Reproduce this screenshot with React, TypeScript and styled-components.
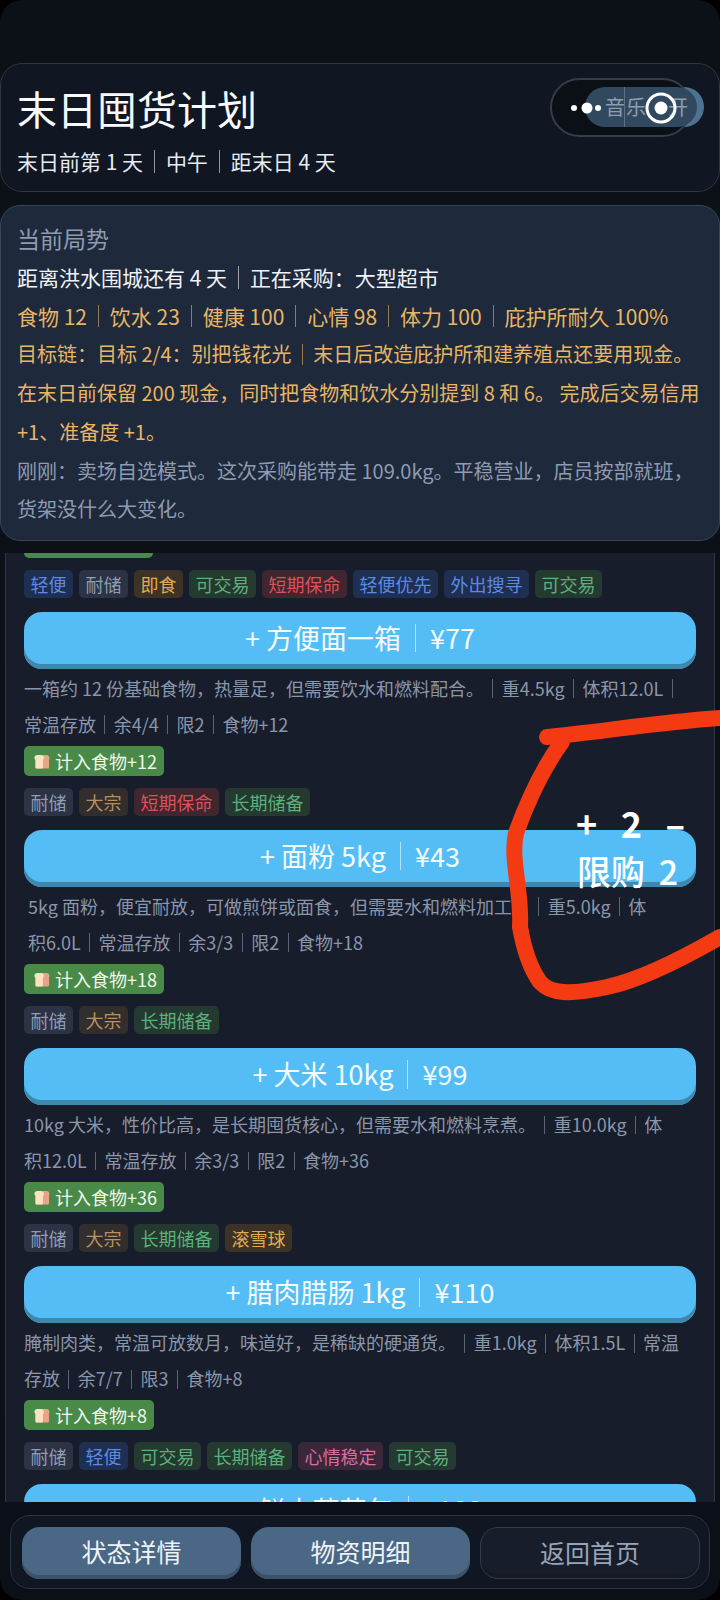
import React from 'react';
import styled, { createGlobalStyle } from 'styled-components';

type Tone = 'blue' | 'gray' | 'amber' | 'green' | 'red' | 'brown' | 'pink';

type Item = {
    name: string;
    price: string;
    lines: string[][];
    gain: string;
    tags: [string, Tone][];
    indent?: number;
};

const toneColors: Record<Tone, { bg: string; fg: string }> = {
    blue: { bg: '#1f2f52', fg: '#5a8ae6' },
    gray: { bg: '#2b3344', fg: '#8f9db2' },
    amber: { bg: '#3c3226', fg: '#e0ab52' },
    green: { bg: '#24392f', fg: '#5cb07c' },
    red: { bg: '#40262e', fg: '#d9535a' },
    brown: { bg: '#322e2e', fg: '#b8925c' },
    pink: { bg: '#3a2739', fg: '#d96ea0' },
};

const GlobalStyle = createGlobalStyle`
    html, body {
        margin: 0;
        padding: 0;
        background: #000;
    }
    * {
        box-sizing: border-box;
    }
`;

const Page = styled.div`
    position: relative;
    width: 720px;
    height: 1600px;
    overflow: hidden;
    border-radius: 22px;
    display: flex;
    flex-direction: column;
    padding-top: 63px;
    background: linear-gradient(180deg, #0c1017 0%, #0b1018 100%);
    color: #f1f5f9;
    font-family: 'Noto Sans CJK SC', 'Noto Sans', sans-serif;
`;

const HeaderCard = styled.header`
    height: 129px;
    padding: 16px 16px 0;
    border: 1px solid #2f3644;
    border-radius: 22px;
    background: #101622;
    flex-shrink: 0;
`;

const Title = styled.h1`
    margin: 0;
    font-size: 40px;
    line-height: 56px;
    font-weight: 400;
    color: #f8fafc;
`;

const SubTitle = styled.div`
    margin-top: 9px;
    font-size: 21px;
    line-height: 32px;
    color: #e6ebf2;
`;

const Sep = styled.span`
    display: inline-block;
    width: 1px;
    height: 1.05em;
    margin: 0 0.52em;
    vertical-align: -0.12em;
    background: currentColor;
    opacity: 0.6;
`;

const StatusCard = styled.section`
    margin-top: 13px;
    height: 336px;
    padding: 12px 16px 0;
    border: 1px solid #38445a;
    border-radius: 20px;
    background: #1e293b;
    flex-shrink: 0;
`;

const StatusHeading = styled.div`
    font-size: 23px;
    line-height: 40px;
    color: #8e9bb0;
`;

const StatusLine = styled.div<{ $tone: 'white' | 'gold' | 'gray'; $small?: boolean }>`
    font-size: ${(props) => (props.$small ? 20 : 21)}px;
    line-height: 38.7px;
    white-space: nowrap;
    color: ${(props) =>
        props.$tone === 'gold' ? '#e8b565' : props.$tone === 'gray' ? '#8e9bb0' : '#eef2f7'};
`;

const ListPanel = styled.main`
    margin: 12px 5px 0;
    height: 949px;
    padding: 0 18px;
    border-left: 1px solid #2f3644;
    border-right: 1px solid #2f3644;
    background: #181d2b;
    overflow: hidden;
    flex-shrink: 0;
`;

const ClippedBadge = styled.div`
    width: 129px;
    height: 5px;
    border-radius: 0 0 5px 5px;
    background: #4a8a49;
`;

const TagRow = styled.div`
    display: flex;
    gap: 6px;
    height: 28px;
    margin-top: 12px;
`;

const Tag = styled.span<{ $tone: Tone }>`
    display: block;
    padding: 0 6.5px;
    border-radius: 5px;
    font-size: 18px;
    line-height: 28px;
    background: ${(props) => toneColors[props.$tone].bg};
    color: ${(props) => toneColors[props.$tone].fg};
`;

const BuyButton = styled.button`
    display: block;
    width: 100%;
    height: 57px;
    margin-top: 14.1px;
    padding: 0 0 5px;
    border: 0;
    border-radius: 18px;
    background: #54bdf5;
    box-shadow: inset 0 -5px 0 #3f87ad;
    color: #f4fbff;
    font-family: inherit;
    font-size: 27px;
    line-height: 52px;
    text-align: center;
    flex-shrink: 0;
`;

const Desc = styled.div<{ $indent?: number }>`
    margin-top: 1px;
    padding-left: ${(props) => props.$indent || 0}px;
    font-size: 18px;
    line-height: 36px;
    color: #8a96aa;

    ${Sep} {
        margin: 0 8.4px;
    }
`;

const DescLine = styled.div`
    white-space: nowrap;
`;

const GainBadge = styled.div`
    display: inline-flex;
    align-items: center;
    gap: 5px;
    height: 30px;
    margin-top: 4px;
    padding: 0 7px 0 9px;
    border-radius: 5px;
    background: #4a8a49;
    color: #eef7ec;
    font-size: 18px;
    vertical-align: top;
`;

const BottomBar = styled.nav`
    margin-top: 13px;
    margin-left: 10px;
    width: 700px;
    height: 74px;
    padding: 11px 10px 0 11px;
    display: grid;
    grid-template-columns: 219px 219px 220px;
    column-gap: 10px;
    border: 1px solid #2c3341;
    border-radius: 20px;
    background: #111722;
    flex-shrink: 0;
`;

const NavButton = styled.button<{ $ghost?: boolean }>`
    height: 52px;
    padding: 0 0 4px;
    border: ${(props) => (props.$ghost ? '1px solid #343c4c' : '0')};
    border-radius: 18px;
    background: ${(props) => (props.$ghost ? '#171d2a' : '#4a6885')};
    box-shadow: inset 0 -4px 0 ${(props) => (props.$ghost ? '#151a26' : '#3d5268')};
    color: ${(props) => (props.$ghost ? '#98a4b7' : '#eef2f7')};
    font-family: inherit;
    font-size: 25px;
    line-height: 48px;
`;

const MusicPill = styled.div`
    position: absolute;
    top: 78px;
    left: 550px;
    width: 142px;
    height: 59px;
    border: 2px solid #363c49;
    border-radius: 30px;
    background: #0b0f16;
`;

const MusicTrack = styled.div`
    position: absolute;
    top: 87px;
    left: 585px;
    width: 119px;
    height: 40px;
    border-radius: 20px;
    background: #4e7391;
`;

const MusicInner = styled.div`
    position: absolute;
    top: 87px;
    left: 585px;
    width: 112px;
    height: 40px;
    border-radius: 20px;
    background: #31495f;
    color: #8f9db0;
    font-size: 20px;
    line-height: 40px;
    padding-left: 20px;
    white-space: nowrap;
`;

const MusicDivider = styled.span`
    display: inline-block;
    width: 1px;
    height: 40px;
    margin: 0 1px 0 -1px;
    vertical-align: top;
    background: #5d7487;
`;

const MusicOn = styled.span`
    margin-left: 22px;
`;

const CapsuleIcon = styled.svg`
    position: absolute;
    top: 90px;
    left: 565px;
`;

const Scribble = styled.svg`
    position: absolute;
    top: 0;
    left: 0;
    pointer-events: none;
`;

const Stepper = styled.div`
    position: absolute;
    top: 799px;
    left: 576px;
    width: 109px;
    display: flex;
    justify-content: space-between;
    color: #fff;
    font-size: 36px;
    line-height: 46px;
    font-weight: 700;
`;

const LimitText = styled.div`
    position: absolute;
    top: 847px;
    left: 577px;
    color: #fff;
    font-size: 34px;
    line-height: 48px;
    font-weight: 500;
    word-spacing: 6px;
    white-space: nowrap;
`;

const Bread = () => (
    <svg width="17" height="17" viewBox="0 0 18 18">
        <path d="M6 2h8c3 0 4 2.500 3 5v8c0 1-.6 1.500-1.500 1.500h-11C3.600 16.500 3 16 3 15V7C1 4 3 2 6 2z" fill="#e8a487" />
        <path d="M1.500 5C1.500 3 3 2 5 2h3c2 0 3.500 1 3.500 3 0 1-.5 1.700-1 2.200V15c0 1-.5 1.500-1.500 1.500H4c-1 0-1.500-.5-1.500-1.500V7.200C2 6.700 1.500 6 1.500 5z" fill="#fbe2c2" />
    </svg>
);

const items: Item[] = [
    {
        name: '方便面一箱',
        price: '¥77',
        lines: [
            ['一箱约 12 份基础食物，热量足，但需要饮水和燃料配合。', '重4.5kg', '体积12.0L', ''],
            ['常温存放', '余4/4', '限2', '食物+12'],
        ],
        gain: '计入食物+12',
        tags: [
            ['耐储', 'gray'],
            ['大宗', 'brown'],
            ['短期保命', 'red'],
            ['长期储备', 'green'],
        ],
    },
    {
        name: '面粉 5kg',
        price: '¥43',
        indent: 4,
        lines: [
            ['5kg 面粉，便宜耐放，可做煎饼或面食，但需要水和燃料加工。', '重5.0kg', '体'],
            ['积6.0L', '常温存放', '余3/3', '限2', '食物+18'],
        ],
        gain: '计入食物+18',
        tags: [
            ['耐储', 'gray'],
            ['大宗', 'brown'],
            ['长期储备', 'green'],
        ],
    },
    {
        name: '大米 10kg',
        price: '¥99',
        lines: [
            ['10kg 大米，性价比高，是长期囤货核心，但需要水和燃料烹煮。', '重10.0kg', '体'],
            ['积12.0L', '常温存放', '余3/3', '限2', '食物+36'],
        ],
        gain: '计入食物+36',
        tags: [
            ['耐储', 'gray'],
            ['大宗', 'brown'],
            ['长期储备', 'green'],
            ['滚雪球', 'amber'],
        ],
    },
    {
        name: '腊肉腊肠 1kg',
        price: '¥110',
        lines: [
            ['腌制肉类，常温可放数月，味道好，是稀缺的硬通货。', '重1.0kg', '体积1.5L', '常温'],
            ['存放', '余7/7', '限3', '食物+8'],
        ],
        gain: '计入食物+8',
        tags: [
            ['耐储', 'gray'],
            ['轻便', 'blue'],
            ['可交易', 'green'],
            ['长期储备', 'green'],
            ['心情稳定', 'pink'],
            ['可交易', 'green'],
        ],
    },
];

const firstTags: [string, Tone][] = [
    ['轻便', 'blue'],
    ['耐储', 'gray'],
    ['即食', 'amber'],
    ['可交易', 'green'],
    ['短期保命', 'red'],
    ['轻便优先', 'blue'],
    ['外出搜寻', 'blue'],
    ['可交易', 'green'],
];

const joinParts = (parts: string[]) =>
    parts.map((part, i) => (
        <React.Fragment key={i}>
            {i > 0 && <Sep />}
            {part}
        </React.Fragment>
    ));

const Tags = ({ tags }: { tags: [string, Tone][] }) => (
    <TagRow>
        {tags.map(([label, tone], i) => (
            <Tag key={i} $tone={tone}>
                {label}
            </Tag>
        ))}
    </TagRow>
);

export default function App() {
    return (
        <Page>
            <GlobalStyle />
            <HeaderCard>
                <Title>末日囤货计划</Title>
                <SubTitle>{joinParts(['末日前第 1 天', '中午', '距末日 4 天'])}</SubTitle>
            </HeaderCard>

            <StatusCard>
                <StatusHeading>当前局势</StatusHeading>
                <StatusLine $tone="white">{joinParts(['距离洪水围城还有 4 天', '正在采购：大型超市'])}</StatusLine>
                <StatusLine $tone="gold">
                    {joinParts(['食物 12', '饮水 23', '健康 100', '心情 98', '体力 100', '庇护所耐久 100%'])}
                </StatusLine>
                <StatusLine $tone="gold" $small>
                    {joinParts(['目标链：目标 2/4：别把钱花光', '末日后改造庇护所和建养殖点还要用现金。'])}
                </StatusLine>
                <StatusLine $tone="gold" $small>
                    在末日前保留 200 现金，同时把食物和饮水分别提到 8 和 6。 完成后交易信用
                </StatusLine>
                <StatusLine $tone="gold" $small>
                    +1、准备度 +1。
                </StatusLine>
                <StatusLine $tone="gray" $small>
                    刚刚：卖场自选模式。这次采购能带走 109.0kg。平稳营业，店员按部就班，
                </StatusLine>
                <StatusLine $tone="gray" $small>
                    货架没什么大变化。
                </StatusLine>
            </StatusCard>

            <ListPanel>
                <ClippedBadge />
                <Tags tags={firstTags} />
                {items.map((item) => (
                    <React.Fragment key={item.name}>
                        <BuyButton>
                            + {item.name}
                            <Sep />
                            {item.price}
                        </BuyButton>
                        <Desc $indent={item.indent}>
                            {item.lines.map((line, i) => (
                                <DescLine key={i}>{joinParts(line)}</DescLine>
                            ))}
                        </Desc>
                        <GainBadge>
                            <Bread />
                            {item.gain}
                        </GainBadge>
                        <Tags tags={item.tags} />
                    </React.Fragment>
                ))}
                <BuyButton>
                    + 鲜大蒜蒜包
                    <Sep />
                    ¥108
                </BuyButton>
            </ListPanel>

            <BottomBar>
                <NavButton>状态详情</NavButton>
                <NavButton>物资明细</NavButton>
                <NavButton $ghost>返回首页</NavButton>
            </BottomBar>

            <MusicTrack />
            <MusicPill />
            <MusicInner>
                音<MusicDivider />乐<MusicOn>开</MusicOn>
            </MusicInner>
            <CapsuleIcon width="120" height="36" viewBox="0 0 120 36">
                <circle cx="9" cy="18" r="3" fill="#fff" />
                <circle cx="22" cy="18" r="5.500" fill="#fff" />
                <circle cx="33" cy="18" r="3" fill="#fff" />
                <circle cx="96" cy="18" r="14" fill="none" stroke="#fff" strokeWidth="3" />
                <circle cx="96" cy="18" r="6.500" fill="#fff" />
            </CapsuleIcon>

            <Scribble width="720" height="1600" viewBox="0 0 720 1600">
                <path
                    d="M547 737 C 600 732, 660 722, 720 718 M562 742 C 545 765, 528 800, 516 833 C 510 860, 522 890, 520 927 C 524 950, 530 968, 540 982 C 550 994, 570 995, 607 987 C 640 980, 680 960, 720 937"
                    fill="none"
                    stroke="#f43a12"
                    strokeWidth="16"
                    strokeLinecap="round"
                    strokeLinejoin="round"
                />
            </Scribble>
            <Stepper>
                <span>+</span>
                <span>2</span>
                <span>–</span>
            </Stepper>
            <LimitText>限购 2</LimitText>
        </Page>
    );
}
